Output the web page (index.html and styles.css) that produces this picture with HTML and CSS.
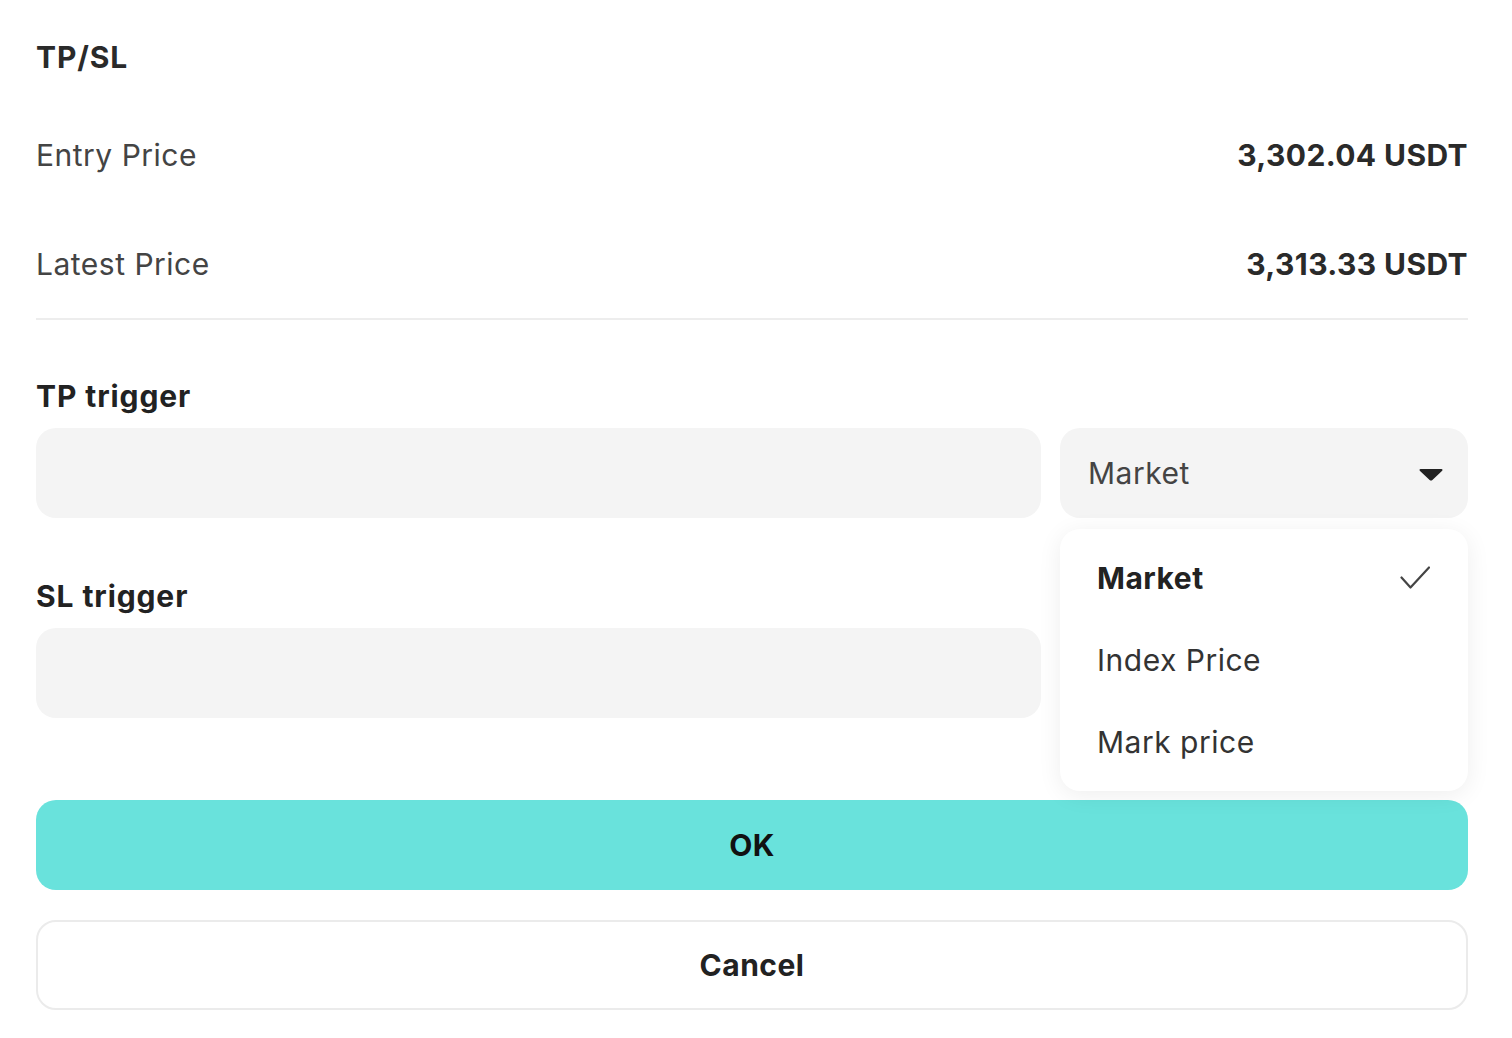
FILE: index.html
```html
<!DOCTYPE html>
<html lang="en">
<head>
  <meta charset="UTF-8" />
  <meta name="viewport" content="width=device-width, initial-scale=1.0" />
  <title>TP/SL</title>
  <link rel="stylesheet" href="styles.css">
</head>
<body>
  <div class="sheet">
    <div class="title">TP/SL</div>

    <div class="info-row">
      <span class="info-label">Entry Price</span>
      <span class="info-value">3,302.04 USDT</span>
    </div>
    <div class="info-row last">
      <span class="info-label">Latest Price</span>
      <span class="info-value">3,313.33 USDT</span>
    </div>

    <div class="field">
      <div class="field-label">TP trigger</div>
      <div class="field-row">
        <input type="text" class="price-input" />
        <div class="select-wrap">
          <div class="select-box">
            <span>Market</span>
            <svg class="caret" width="24" height="13" viewBox="0 0 24 13"><path d="M1.5 1h21a1 1 0 0 1 .7 1.7l-9.8 9.2a2 2 0 0 1-2.8 0L.8 2.7A1 1 0 0 1 1.5 1z" fill="#222"/></svg>
          </div>
          <div class="menu">
            <div class="menu-item active">
              <span>Market</span>
              <svg width="30" height="24" viewBox="0 0 30 24"><path d="M1.5 11.5l9 10L29 1.5" fill="none" stroke="#444" stroke-width="2.2" stroke-linecap="round" stroke-linejoin="round"/></svg>
            </div>
            <div class="menu-item">Index Price</div>
            <div class="menu-item">Mark price</div>
          </div>
        </div>
      </div>
    </div>

    <div class="field">
      <div class="field-label">SL trigger</div>
      <div class="field-row">
        <input type="text" class="price-input" />
      </div>
    </div>

    <div class="actions">
      <button class="btn btn-ok">OK</button>
      <button class="btn btn-cancel">Cancel</button>
    </div>
  </div>
</body>
</html>
```

FILE: styles.css
```css
body {
  font-family: Inter, 'Noto Sans', sans-serif;
  margin: 0;
  background: #fff;
  color: #222;
}
.sheet {
  padding: 37px 44px 0 36px;
  letter-spacing: 0.5px;
}
.title {
  font-size: 30px;
  font-weight: 700;
  line-height: 40px;
  letter-spacing: 0.9px;
  margin-bottom: 23px;
  color: #2a2a2a;
}
.info-row {
  display: flex;
  align-items: center;
  justify-content: space-between;
  height: 109px;
  font-size: 30px;
}
.info-row.last {
  border-bottom: 2px solid #ededed;
}
.info-label {
  color: #444;
}
.info-value {
  font-weight: 700;
  letter-spacing: 0.4px;
  color: #2a2a2a;
}
.field {
  margin-top: 56px;
}
.field + .field {
  margin-top: 58px;
}
.field-label {
  font-size: 30px;
  font-weight: 700;
  line-height: 40px;
  letter-spacing: 0.9px;
  color: #222;
  margin-bottom: 12px;
}
.field-row {
  display: flex;
  gap: 19px;
}
.price-input {
  flex: 0 0 1005px;
  height: 90px;
  box-sizing: border-box;
  border: none;
  border-radius: 20px;
  background: #f4f4f4;
  outline: none;
  font: inherit;
}
.select-wrap {
  flex: 1;
  position: relative;
}
.select-box {
  height: 90px;
  box-sizing: border-box;
  display: flex;
  align-items: center;
  justify-content: space-between;
  padding: 0 25px 0 28px;
  border-radius: 20px;
  background: #f4f4f4;
  font-size: 30px;
  color: #444;
}
.caret {
  margin-top: 2px;
}
.menu {
  position: absolute;
  top: 101px;
  left: 0;
  right: 0;
  z-index: 2;
  padding: 8px 0;
  background: #fff;
  border-radius: 20px;
  box-shadow: 0 4px 24px rgba(0, 0, 0, 0.07);
}
.menu-item {
  height: 82px;
  display: flex;
  align-items: center;
  justify-content: space-between;
  padding: 0 38px 0 37px;
  font-size: 30px;
  color: #333;
}
.menu-item.active {
  font-weight: 700;
  color: #222;
}
.actions {
  margin-top: 82px;
  display: flex;
  flex-direction: column;
  gap: 30px;
}
.btn {
  height: 90px;
  border-radius: 20px;
  font-family: inherit;
  font-size: 30px;
  font-weight: 700;
  letter-spacing: 0.5px;
  cursor: pointer;
}
.btn-ok {
  border: none;
  background: #69e2dc;
  color: #111;
}
.btn-cancel {
  background: #fff;
  border: 2px solid #ebebeb;
  color: #222;
}
```
